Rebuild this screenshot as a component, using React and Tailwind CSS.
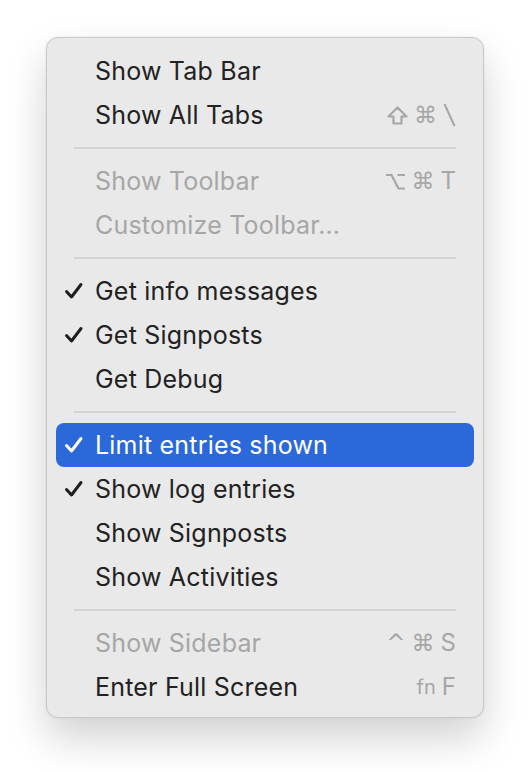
import React from 'react';

function Check({ white }) {
  return (
    <svg width="20" height="18" viewBox="0 0 20 18" className="absolute left-[8px] top-1/2 -translate-y-1/2">
      <path d="M2.5 9.5 L7.5 15 L17 2.5" fill="none" stroke={white ? '#ffffff' : '#1f1f1f'} strokeWidth="3" strokeLinecap="round" strokeLinejoin="round" />
    </svg>
  );
}

function Shift() {
  return (
    <svg width="21" height="19" viewBox="0 0 21 19">
      <path d="M10.5 1.5 L19.5 10.5 L14.5 10.5 L14.5 17.5 L6.5 17.5 L6.5 10.5 L1.5 10.5 Z" fill="none" stroke="#a6a6a6" strokeWidth="2.2" strokeLinejoin="round" />
    </svg>
  );
}

function Option() {
  return (
    <svg width="21" height="17" viewBox="0 0 21 17">
      <path d="M1 2 L6.5 2 L13.5 15.5 L20 15.5 M12.5 2 L20 2" fill="none" stroke="#a6a6a6" strokeWidth="2.2" />
    </svg>
  );
}

function Backslash() {
  return (
    <svg width="13" height="24" viewBox="0 0 13 24">
      <path d="M1.5 1 L11.5 23" fill="none" stroke="#a6a6a6" strokeWidth="2" />
    </svg>
  );
}

function Item({ label, checked, disabled, active, shortcut }) {
  return (
    <div
      className={
        'relative flex h-[44px] items-center justify-between rounded-[8px] pl-[39px] pr-[18px] ' +
        (active ? 'bg-[#2b68d9] text-white' : disabled ? 'text-[#a6a6a6]' : 'text-[#222222]')
      }
    >
      {checked && <Check white={active} />}
      <span className="pt-[1px] text-[25px] leading-none tracking-[0.2px]">{label}</span>
      {shortcut && (
        <span className="flex items-center gap-[6px] text-[24px] leading-none text-[#a6a6a6]">{shortcut}</span>
      )}
    </div>
  );
}

function Sep() {
  return (
    <div className="flex h-[22px] items-center px-[18px]">
      <div className="h-[2px] w-full bg-[#d3d3d3]" />
    </div>
  );
}

const sym = "font-['DejaVu_Sans',sans-serif]";

export default function App() {
  return (
    <div className="min-h-[772px] w-[530px] bg-white pl-[46px] pt-[37px] font-['Inter','Liberation_Sans',sans-serif]">
      <div className="w-[438px] rounded-[12px] border border-[#c9c9c9] bg-[#e9e9e9] px-[9px] pt-[11px] pb-[8px] shadow-[0_20px_40px_rgba(0,0,0,0.18),0_0_2px_rgba(0,0,0,0.1)]">
        <Item label="Show Tab Bar" />
        <Item
          label="Show All Tabs"
          shortcut={
            <>
              <Shift />
              <span className={sym + ' text-[23px]'}>⌘</span>
              <Backslash />
            </>
          }
        />
        <Sep />
        <Item
          label="Show Toolbar"
          disabled
          shortcut={
            <>
              <Option />
              <span className={sym + ' text-[23px]'}>⌘</span>
              <span>T</span>
            </>
          }
        />
        <Item label="Customize Toolbar…" disabled />
        <Sep />
        <Item label="Get info messages" checked />
        <Item label="Get Signposts" checked />
        <Item label="Get Debug" />
        <Sep />
        <Item label="Limit entries shown" checked active />
        <Item label="Show log entries" checked />
        <Item label="Show Signposts" />
        <Item label="Show Activities" />
        <Sep />
        <Item
          label="Show Sidebar"
          disabled
          shortcut={
            <>
              <span className={sym + ' text-[23px]'}>^</span>
              <span className={sym + ' text-[23px]'}>⌘</span>
              <span>S</span>
            </>
          }
        />
        <Item
          label="Enter Full Screen"
          shortcut={
            <>
              <span className="text-[20px]">fn</span>
              <span>F</span>
            </>
          }
        />
      </div>
    </div>
  );
}
